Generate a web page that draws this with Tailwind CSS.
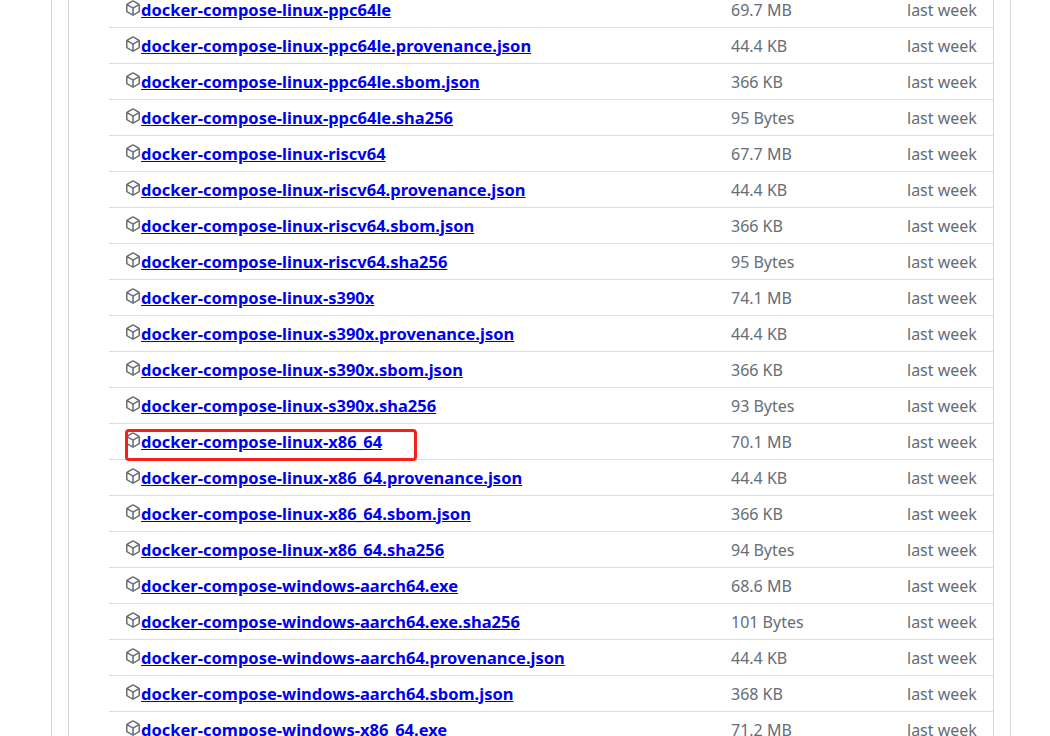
<!DOCTYPE html>
<html lang="en">
<head>
  <meta charset="UTF-8" />
  <script src="https://cdn.jsdelivr.net/npm/@tailwindcss/browser@4"></script>
  <title>Assets</title>
</head>
<body class="bg-white h-[736px] overflow-hidden font-['Noto_Sans',sans-serif]">
  <div class="ml-[51px] w-[960px] h-[736px] border-x border-[#d0d7de] px-[16px] overflow-hidden">
    <div class="relative flex flex-col border-x border-[#d0d7de] h-[736px] pl-[40px] w-[926px]">
      <div id="rows" class="-mt-[8px]"></div>
      <!-- red highlight round the x86_64 download -->
      <div class="absolute left-[56px] top-[429px] w-[292px] h-[32px] border-[3px] border-[#f5201a] rounded-[4px]"></div>
    </div>
  </div>

  <script>
    const assets = [
      ['docker-compose-linux-ppc64le', '69.7 MB'],
      ['docker-compose-linux-ppc64le.provenance.json', '44.4 KB'],
      ['docker-compose-linux-ppc64le.sbom.json', '366 KB'],
      ['docker-compose-linux-ppc64le.sha256', '95 Bytes'],
      ['docker-compose-linux-riscv64', '67.7 MB'],
      ['docker-compose-linux-riscv64.provenance.json', '44.4 KB'],
      ['docker-compose-linux-riscv64.sbom.json', '366 KB'],
      ['docker-compose-linux-riscv64.sha256', '95 Bytes'],
      ['docker-compose-linux-s390x', '74.1 MB'],
      ['docker-compose-linux-s390x.provenance.json', '44.4 KB'],
      ['docker-compose-linux-s390x.sbom.json', '366 KB'],
      ['docker-compose-linux-s390x.sha256', '93 Bytes'],
      ['docker-compose-linux-x86_64', '70.1 MB'],
      ['docker-compose-linux-x86_64.provenance.json', '44.4 KB'],
      ['docker-compose-linux-x86_64.sbom.json', '366 KB'],
      ['docker-compose-linux-x86_64.sha256', '94 Bytes'],
      ['docker-compose-windows-aarch64.exe', '68.6 MB'],
      ['docker-compose-windows-aarch64.exe.sha256', '101 Bytes'],
      ['docker-compose-windows-aarch64.provenance.json', '44.4 KB'],
      ['docker-compose-windows-aarch64.sbom.json', '368 KB'],
      ['docker-compose-windows-x86_64.exe', '71.2 MB'],
    ];
    const icon = '<svg viewBox="0 0 16 16" width="16" height="16" fill="#656d76" class="shrink-0 -mt-[4px]"><path d="m8.878.392 5.25 3.045c.54.314.872.89.872 1.514v6.098a1.75 1.75 0 0 1-.872 1.514l-5.25 3.045a1.75 1.75 0 0 1-1.756 0l-5.25-3.045A1.75 1.75 0 0 1 1 11.049V4.951c0-.624.332-1.201.872-1.514L7.122.392a1.75 1.75 0 0 1 1.756 0ZM7.875 1.69l-4.63 2.685L8 7.133l4.755-2.758-4.63-2.685a.248.248 0 0 0-.25 0ZM2.5 5.677v5.372c0 .09.047.171.125.216l4.625 2.683V8.432Zm6.25 8.271 4.625-2.683a.25.25 0 0 0 .125-.216V5.677L8.75 8.432Z"/></svg>';
    document.getElementById('rows').innerHTML = assets.map(([name, size]) => `
      <div class="flex items-center h-[36px] border-b border-[#d8dee4] pl-[16px] pt-[1px] text-[16px]">
        ${icon}
        <a href="#" class="w-[590px] text-[16.5px] font-bold text-[#0000ee] underline whitespace-nowrap">${name}</a>
        <span class="w-[176px] text-[#656d76]">${size}</span>
        <span class="text-[#656d76]">last week</span>
      </div>`).join('');
  </script>
</body>
</html>
